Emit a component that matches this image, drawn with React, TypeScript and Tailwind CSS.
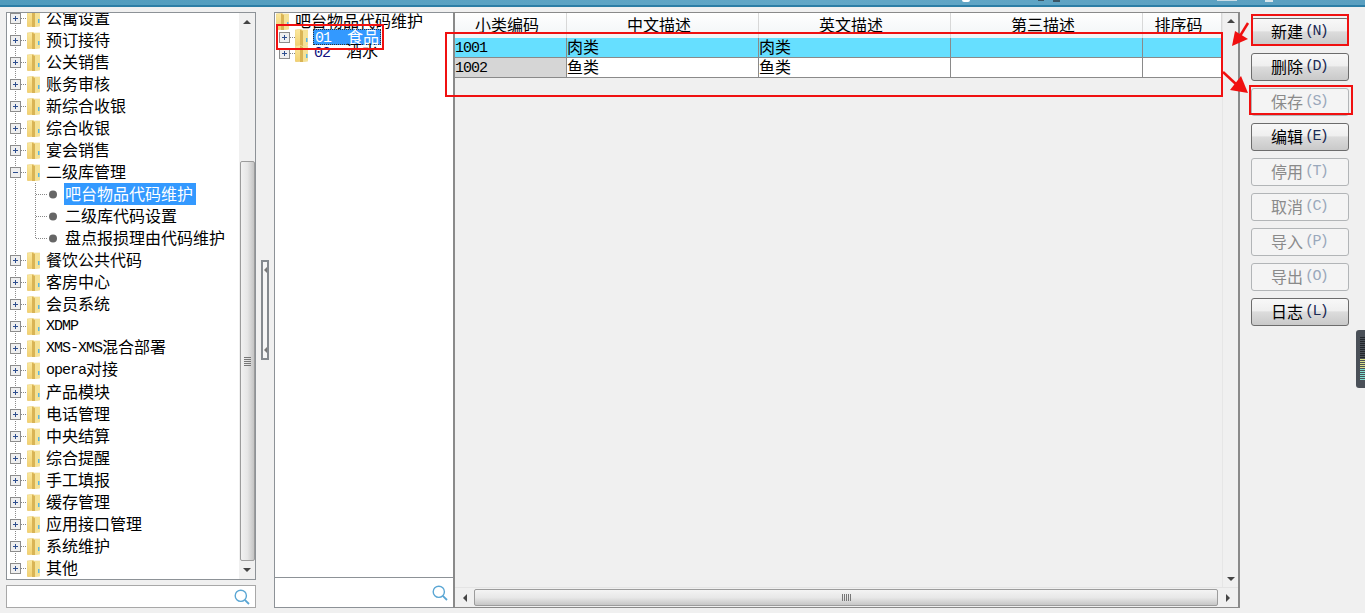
import type { ReactNode } from "react";

const cjk = "font-['Noto_Sans_CJK_SC','Liberation_Sans',sans-serif]";

// latin runs are 8px per char like the old bitmap font
function Mixed({ text }: { text: string }) {
  const parts = text.split(/([\x20-\x7e]+)/).filter(Boolean);
  return (
    <>
      {parts.map((p, i) =>
        /^[\x20-\x7e]+$/.test(p) ? (
          <span key={i} className="font-['Liberation_Mono',monospace] text-[15px] tracking-[-1px] align-[1px]">
            {p}
          </span>
        ) : (
          <span key={i}>{p}</span>
        )
      )}
    </>
  );
}

function Folder() {
  return (
    <svg width="13" height="17" viewBox="0 0 13 17" className="shrink-0">
      <defs>
        <linearGradient id="fg" x1="0" y1="0" x2="0" y2="1">
          <stop offset="0" stopColor="#fbe9a0" />
          <stop offset="1" stopColor="#f2d070" />
        </linearGradient>
      </defs>
      <path d="M0 1 L6 0 L7 1 L13 1 L13 16 L1 17 L0 16 Z" fill="url(#fg)" stroke="#e6cc80" strokeWidth="0.5" />
      <path d="M5 0.5 L8 2 L8 17 L5 17 Z" fill="#d9b455" />
      <path d="M8 2 L13 1 L13 16 L8 17 Z" fill="#f5e296" />
      <rect x="11" y="9" width="1.5" height="4" fill="#5ab6e4" />
    </svg>
  );
}

function Gutter({ open, last, h = 22, w = 21, noLine }: { open: boolean; last?: boolean; h?: number; w?: number; noLine?: boolean }) {
  const c = h / 2;
  return (
    <svg width={w} height={h} className="shrink-0">
      {!noLine && <line x1="9.5" y1="0" x2="9.5" y2={last ? c : h} stroke="#888" strokeDasharray="1 1" />}
      <line x1="15" y1={c + 0.5} x2={w} y2={c + 0.5} stroke="#888" strokeDasharray="1 1" />
      <rect x="4.5" y={c - 4.5} width="10" height="10" fill="#efefef" stroke="#8c8c8c" />
      <line x1="7" y1={c + 0.5} x2="12" y2={c + 0.5} stroke="#2f4f8f" />
      {!open && <line x1="9.5" y1={c - 2} x2="9.5" y2={c + 3} stroke="#2f4f8f" />}
    </svg>
  );
}

function TreeRow({ label, open, last }: { label: string; open?: boolean; last?: boolean }) {
  return (
    <div className="flex h-[22px] items-center -ml-px">
      <Gutter open={!!open} last={last} />
      <Folder />
      <span className="ml-[6px] pb-[2px] text-[16px] leading-[20px] text-black whitespace-pre">
        <Mixed text={label} />
      </span>
    </div>
  );
}

function ChildRow({ label, selected, last }: { label: string; selected?: boolean; last?: boolean }) {
  return (
    <div className="flex h-[22px] items-center -ml-px">
      <svg width="58" height="22" className="shrink-0">
        <line x1="9.5" y1="0" x2="9.5" y2="22" stroke="#888" strokeDasharray="1 1" />
        <line x1="29.5" y1="0" x2="29.5" y2={last ? 11 : 22} stroke="#888" strokeDasharray="1 1" />
        <line x1="30" y1="11.5" x2="41" y2="11.5" stroke="#888" strokeDasharray="1 1" />
        <circle cx="47" cy="11.5" r="4" fill="#666" />
      </svg>
      <span
        className={
          "h-[22px] pl-px pr-[3px] text-[16px] leading-[20px] whitespace-pre " +
          (selected ? "bg-[#3399ff] text-white" : "text-black")
        }
      >
        {label}
      </span>
    </div>
  );
}

function Arrow({ dir }: { dir: "up" | "down" | "left" | "right" }) {
  const pts = {
    up: "0,5 8,5 4,1",
    down: "0,1 8,1 4,5",
    left: "5,0 5,8 1,4",
    right: "1,0 1,8 5,4",
  }[dir];
  const vertical = dir === "up" || dir === "down";
  return (
    <svg width={vertical ? 8 : 6} height={vertical ? 6 : 8} viewBox={vertical ? "0 0 8 6" : "0 0 6 8"}>
      <polygon points={pts} fill="#444" />
    </svg>
  );
}

function Grip({ horizontal }: { horizontal?: boolean }) {
  return (
    <svg width={horizontal ? 9 : 7} height={horizontal ? 7 : 9}>
      {[0, 2, 4, 6, 8].map((o) =>
        horizontal ? (
          <line key={o} x1={o + 0.5} x2={o + 0.5} y1="0" y2="7" stroke="#777" />
        ) : (
          <line key={o} y1={o + 0.5} y2={o + 0.5} x1="0" x2="7" stroke="#777" />
        )
      )}
    </svg>
  );
}

function SearchIcon() {
  return (
    <svg width="16" height="16" viewBox="0 0 16 16" className="shrink-0">
      <circle cx="6.8" cy="6.8" r="5.6" fill="none" stroke="#5aa6d4" strokeWidth="1.4" />
      <line x1="10.8" y1="10.8" x2="15" y2="15" stroke="#5aa6d4" strokeWidth="1.8" />
    </svg>
  );
}

function Btn({ label, keyName, disabled }: { label: string; keyName: string; disabled?: boolean }) {
  return (
    <div
      className={
        "flex h-[28px] w-[98px] items-center rounded-[3px] border pb-[2px] pl-[19px] text-[16px] " +
        (disabled
          ? "border-[#b2b5b7] bg-[#f4f4f4] text-[#8a8a8a]"
          : "border-[#6c6c6c] bg-[linear-gradient(#f8f8f8_0%,#efefef_45%,#dcdcdc_50%,#c9c9c9_100%)] text-black")
      }
    >
      <span>{label}</span>
      <span
        className={
          "ml-[2px] pt-[3px] font-['Liberation_Mono',monospace] text-[15px] tracking-[-1.6px] " +
          (disabled ? "text-[#9aa8bb]" : "text-[#1b2a55]")
        }
      >
        ({keyName})
      </span>
    </div>
  );
}

const columns = ["小类编码", "中文描述", "英文描述", "第三描述", "排序码"];
const gridCols = "grid grid-cols-[112px_192px_192px_192px_79px]";

function Cell({ children, className = "" }: { children?: ReactNode; className?: string }) {
  return (
    <div className={"h-[20px] border-r border-b border-[#8a8a8a] text-[16px] leading-[16px] whitespace-pre overflow-hidden " + className}>
      {children}
    </div>
  );
}

const topItems = ["公寓设置", "预订接待", "公关销售", "账务审核", "新综合收银", "综合收银", "宴会销售"];
const bottomItems = [
  "餐饮公共代码",
  "客房中心",
  "会员系统",
  "XDMP",
  "XMS-XMS混合部署",
  "opera对接",
  "产品模块",
  "电话管理",
  "中央结算",
  "综合提醒",
  "手工填报",
  "缓存管理",
  "应用接口管理",
  "系统维护",
];

export default function App() {
  return (
    <div className={"relative h-[613px] w-[1365px] overflow-hidden bg-[#f0f0f0] " + cjk}>
      <div className="h-[5px] bg-[linear-gradient(90deg,#4f9bbd,#62a7c7_60%,#5a9fc0)]" />
      <div className="h-[2px] bg-[#2c7ea6]" />

      <div className="flex pt-[5px]">
        {/* left nav */}
        <div className="ml-[6px] w-[250px]">
          <div className="flex h-[568px] border border-[#8d9297] bg-white">
            <div className="min-w-0 flex-1 overflow-hidden">
              <div className="-mt-[6px]">
                {topItems.map((t) => (
                  <TreeRow key={t} label={t} />
                ))}
                <TreeRow label="二级库管理" open />
                <ChildRow label="吧台物品代码维护" selected />
                <ChildRow label="二级库代码设置" />
                <ChildRow label="盘点报损理由代码维护" last />
                {bottomItems.map((t) => (
                  <TreeRow key={t} label={t} />
                ))}
                <TreeRow label="其他" last />
              </div>
            </div>
            <div className="flex w-[16px] flex-col items-center bg-[#f0f0f0]">
              <div className="flex h-[16px] items-center justify-center pt-[2px]">
                <Arrow dir="up" />
              </div>
              <div className="mt-[132px] flex h-[400px] w-[15px] items-center justify-center rounded-[2px] border border-[#9c9c9c] bg-[linear-gradient(90deg,#f2f2f2,#e6e6e6_50%,#c4c4c4)]">
                <Grip />
              </div>
              <div className="flex flex-1 items-center justify-center">
                <Arrow dir="down" />
              </div>
            </div>
          </div>
          <div className="mt-[5px] flex h-[23px] items-center justify-end border border-[#a8a8a8] bg-white pr-[5px]">
            <SearchIcon />
          </div>
        </div>

        {/* splitter */}
        <div className="flex w-[18px] items-start justify-center pt-[248px]">
          <div className="flex h-[100px] w-[8px] flex-col items-center justify-between border-2 border-[#858a8f] bg-[#f6f6f6] py-[5px]">
            <svg width="3" height="6"><polygon points="3,0 3,6 0,3" fill="#777" /></svg>
            <svg width="3" height="6"><polygon points="3,0 3,6 0,3" fill="#777" /></svg>
          </div>
        </div>

        {/* category tree */}
        <div className="flex h-[596px] w-[180px] flex-col border border-[#8d9297] bg-white">
          <div className="min-h-0 flex-1 overflow-hidden">
            <div className="flex h-[16px] items-center">
              <span className="ml-[1px] flex"><Folder /></span>
              <span className="ml-[6px] pb-[2px] text-[16px] leading-[14px] whitespace-pre">吧台物品代码维护</span>
            </div>
            <div className="flex h-[16px] items-center">
              <Gutter open={false} h={16} w={20} noLine />
              <Folder />
              <span className="ml-[5px] h-[16px] border border-dotted border-[#333] bg-[#3399ff] pl-px pr-px text-[16px] leading-[12px] whitespace-pre text-white">
                <Mixed text="01  食品" />
              </span>
            </div>
            <div className="flex h-[16px] items-center">
              <Gutter open={false} h={16} w={20} noLine />
              <Folder />
              <span className="ml-[6px] pb-[2px] text-[16px] leading-[14px] whitespace-pre text-black">
                <span className="font-['Liberation_Mono',monospace] text-[15px] tracking-[-1px] text-[#101080]">02  </span>
                酒水
              </span>
            </div>
          </div>
          <div className="flex h-[30px] items-center justify-end border-t border-[#8d9297] bg-white pr-[5px]">
            <SearchIcon />
          </div>
        </div>

        {/* data grid */}
        <div className="-ml-[1px] flex h-[596px] w-[787px] flex-col border-x-2 border-y border-[#8a8a8a] bg-[#f0f0f0]">
          <div className="flex min-h-0 flex-1">
            <div className="w-[767px]">
              <div className={gridCols + " h-[25px] bg-[linear-gradient(#ffffff,#f1f4f6)]"}>
                {columns.map((c) => (
                  <div key={c} className="border-r border-[#d8d8d8] pr-[7px] text-center text-[16px] leading-[22px] text-black">
                    {c}
                  </div>
                ))}
              </div>
              <div className={gridCols + " bg-[#66dfff]"}>
                <Cell><Mixed text="1001" /></Cell>
                <Cell>肉类</Cell>
                <Cell>肉类</Cell>
                <Cell />
                <Cell />
              </div>
              <div className={gridCols + " bg-white"}>
                <Cell className="bg-[#d6d6d6]"><Mixed text="1002" /></Cell>
                <Cell>鱼类</Cell>
                <Cell>鱼类</Cell>
                <Cell />
                <Cell />
              </div>
            </div>
            <div className="flex w-[16px] flex-col items-center justify-between border-l border-[#e6e6e6] py-[5px]">
              <Arrow dir="up" />
              <Arrow dir="down" />
            </div>
          </div>
          <div className="flex h-[20px] items-center border-t border-[#e4e4e4]">
            <div className="flex w-[19px] justify-center"><Arrow dir="left" /></div>
            <div className="flex h-[17px] w-[744px] items-center justify-center rounded-[2px] border border-[#9c9c9c] bg-[linear-gradient(#f4f4f4,#e8e8e8_50%,#c6c6c6)]">
              <Grip horizontal />
            </div>
            <div className="flex flex-1 justify-center"><Arrow dir="right" /></div>
          </div>
        </div>

        {/* action buttons */}
        <div className="ml-[11px] flex flex-col gap-[7px] pt-[6px]">
          <Btn label="新建" keyName="N" />
          <Btn label="删除" keyName="D" />
          <Btn label="保存" keyName="S" disabled />
          <Btn label="编辑" keyName="E" />
          <Btn label="停用" keyName="T" disabled />
          <Btn label="取消" keyName="C" disabled />
          <Btn label="导入" keyName="P" disabled />
          <Btn label="导出" keyName="O" disabled />
          <Btn label="日志" keyName="L" />
        </div>
      </div>

      {/* bits of the title bar icons, cut off by the crop */}
      <div className="absolute left-[962px] top-0 h-[2px] w-[8px] rounded-b bg-white" />
      <div className="absolute left-[1038px] top-0 h-px w-[6px] bg-[#3b5666]" />
      <div className="absolute left-[1053px] top-0 h-[2px] w-[7px] bg-[#3b5666]" />
      <div className="absolute left-[1217px] top-0 h-px w-[20px] bg-[#c8dce6]" />
      <div className="absolute left-[1265px] top-0 h-[2px] w-[8px] bg-[#d8e6ec]" />

      {/* floating side tab */}
      <div className="absolute left-[1356px] top-[330px] flex h-[58px] w-[9px] flex-col gap-px rounded-l-[3px] bg-[#4a5058] pl-[4px] pt-[7px]">
        {Array.from({ length: 22 }).map((_, i) => (
          <div
            key={i}
            className={"h-px w-[5px] " + (i < 11 ? "bg-[#22262b]" : i < 16 ? "bg-[#d8e08a]" : "bg-[#7fe0d0]")}
          />
        ))}
      </div>

      {/* red annotations */}
      <div className="absolute left-[276px] top-[24px] h-[26px] w-[108px] border-2 border-[#f01010]" />
      <div className="absolute left-[445px] top-[32px] h-[65px] w-[778px] border-2 border-[#f01010]" />
      <div className="absolute left-[1251px] top-[14px] h-[32px] w-[98px] border-2 border-[#f01010]" />
      <div className="absolute left-[1249px] top-[85px] h-[30px] w-[104px] border-2 border-[#f01010]" />
      <svg className="absolute left-[1225px] top-[18px]" width="30" height="30">
        <line x1="23" y1="5" x2="15" y2="18" stroke="#f01010" strokeWidth="2.5" />
        <polygon points="7,28 10,13 23,21" fill="#f01010" />
      </svg>
      <svg className="absolute left-[1218px] top-[68px]" width="34" height="30">
        <line x1="5" y1="4" x2="19" y2="17" stroke="#f01010" strokeWidth="2.5" />
        <polygon points="12,22 30,25 23,8" fill="#f01010" />
      </svg>
    </div>
  );
}
